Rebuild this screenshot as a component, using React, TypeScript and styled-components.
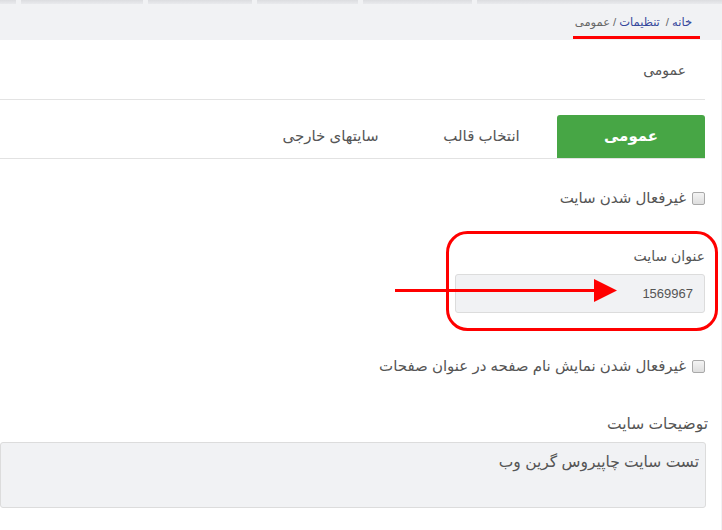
import React from "react";
import styled, { createGlobalStyle } from "styled-components";

const GlobalStyle = createGlobalStyle`
  html, body {
    margin: 0;
    padding: 0;
    background: #f1f2f4;
    font-family: "Liberation Sans", "DejaVu Sans", sans-serif;
    color: #555;
  }
  #root {
    min-height: 530px;
    position: relative;
    overflow: hidden;
  }
`;

const Page = styled.div`
  direction: rtl;
  width: 722px;
  height: 530px;
  position: relative;
  overflow: hidden;
`;

const TopStrip = styled.div`
  direction: ltr;
  height: 4px;
  display: flex;
  gap: 5px;
  background: #f1f2f4;
`;

const StripPiece = styled.div<{ w: number }>`
  width: ${(p) => p.w}px;
  flex: ${(p) => (p.w ? "none" : "1")};
  height: 4px;
  background: linear-gradient(#dcdde0, #e9eaed);
`;

const BreadcrumbBar = styled.div`
  height: 35px;
  display: flex;
  align-items: center;
  padding-right: 30px;
  font-size: 11.5px;
`;

const Crumb = styled.span<{ link?: boolean }>`
  color: ${(p) => (p.link ? "#34479c" : "#666")};
`;

const Sep = styled.span<{ wide?: boolean }>`
  color: #666;
  margin: 0 3px 0 ${(p) => (p.wide ? 6 : 3)}px;
`;

const Panel = styled.div`
  background: #fff;
  margin-top: 1px;
  margin-right: 1px;
  height: 490px;
  padding-right: 16px;
`;

const PanelHeader = styled.div`
  height: 59px;
  display: flex;
  align-items: center;
  padding-right: 19px;
  font-size: 14px;
  color: #555;
  border-bottom: 1px solid #e3e3e3;
`;

const TabBar = styled.div`
  margin-top: 15px;
  height: 43px;
  display: flex;
  border-bottom: 1px solid #e2e2e2;
`;

const Tab = styled.div<{ active?: boolean }>`
  width: ${(p) => (p.active ? 148 : 151)}px;
  display: flex;
  align-items: center;
  justify-content: center;
  padding-bottom: 2px;
  box-sizing: border-box;
  font-size: 15px;
  border-radius: 3px 3px 0 0;
  background: ${(p) => (p.active ? "#47a645" : "transparent")};
  color: ${(p) => (p.active ? "#fff" : "#555")};
  font-weight: ${(p) => (p.active ? "bold" : "normal")};
`;

const Form = styled.div`
  display: flex;
  flex-direction: column;
`;

const CheckRow = styled.label<{ top: number }>`
  display: flex;
  align-items: center;
  gap: 6px;
  margin-top: ${(p) => p.top}px;
  height: 20px;
  font-size: 15px;
  color: #555;
`;

const Box = styled.span`
  width: 11px;
  height: 11px;
  flex: none;
  border: 1px solid #a9a9a9;
  border-radius: 2px;
  background: linear-gradient(#f4f4f4, #dedede);
`;

const Label = styled.div<{ top: number; shift?: number; size?: number }>`
  margin-top: ${(p) => p.top}px;
  margin-right: ${(p) => p.shift || 0}px;
  font-size: ${(p) => p.size || 14}px;
  height: 20px;
  line-height: 20px;
  color: #555;
`;

const Input = styled.div`
  margin-top: 8px;
  width: 237px;
  height: 37px;
  border: 1px solid #dcdcdc;
  border-radius: 3px;
  background: #f1f2f4;
  display: flex;
  align-items: center;
  padding-right: 11px;
  box-sizing: content-box;
  font-size: 13px;
  color: #555;
`;

const TextArea = styled.div`
  margin-top: 8px;
  margin-right: -1px;
  height: 66px;
  border: 1px solid #dcdcdc;
  border-radius: 3px;
  background: #f1f2f4;
  padding: 10px 6px 0 0;
  box-sizing: border-box;
  font-size: 15.5px;
  color: #555;
`;

const Annotation = styled.svg`
  position: absolute;
  left: 0;
  top: 0;
  pointer-events: none;
`;

export default function App() {
  return (
    <Page>
      <GlobalStyle />
      <TopStrip>
        <StripPiece w={16} />
        <StripPiece w={122} />
        <StripPiece w={104} />
        <StripPiece w={101} />
        <StripPiece w={109} />
        <StripPiece w={0} />
      </TopStrip>
      <BreadcrumbBar>
        <Crumb link>خانه</Crumb>
        <Sep wide>/</Sep>
        <Crumb link>تنظیمات</Crumb>
        <Sep>/</Sep>
        <Crumb>عمومی</Crumb>
      </BreadcrumbBar>
      <Panel>
        <PanelHeader>عمومی</PanelHeader>
        <TabBar>
          <Tab active>عمومی</Tab>
          <Tab>انتخاب قالب</Tab>
          <Tab>سایتهای خارجی</Tab>
        </TabBar>
        <Form>
          <CheckRow top={29}>
            <Box />
            غیرفعال شدن سایت
          </CheckRow>
          <Label top={38}>عنوان سایت</Label>
          <Input>1569967</Input>
          <CheckRow top={43}>
            <Box />
            غیرفعال شدن نمایش نام صفحه در عنوان صفحات
          </CheckRow>
          <Label top={38} shift={-3} size={15.5}>توضیحات سایت</Label>
          <TextArea>تست سایت چاپیروس گرین وب</TextArea>
        </Form>
      </Panel>
      <Annotation width={722} height={530}>
        <rect x={573} y={36} width={127} height={3} fill="#ff0000" />
        <rect x={447.5} y={232.5} width={269} height={97} rx={20} fill="none" stroke="#ff0000" strokeWidth={3} />
        <rect x={395} y={289} width={202} height={3} fill="#ff0000" />
        <polygon points="594,279 617,290.5 594,302" fill="#ff0000" />
      </Annotation>
    </Page>
  );
}
